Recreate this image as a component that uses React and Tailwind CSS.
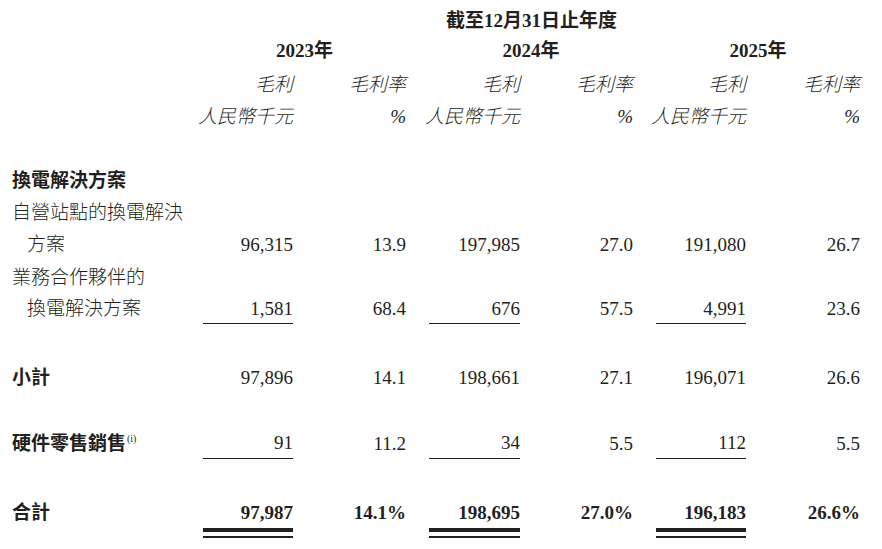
import React from 'react'

const grid = 'grid grid-cols-[191px_90px_113px_23px_91px_113px_23px_90px_114px]'

const rows = [
  { label: '自營站點的換電解決', h: 'h-[32px]' },
  { label: '方案', indent: true, h: 'h-[33px]', vals: ['96,315', '13.9', '197,985', '27.0', '191,080', '26.7'] },
  { label: '業務合作夥伴的', h: 'h-[32px]' },
  { label: '換電解決方案', indent: true, h: 'h-[31px]', line: true, vals: ['1,581', '68.4', '676', '57.5', '4,991', '23.6'] },
]

const Cell = ({ children, line, bold }) => (
  <div className={`flex items-center justify-end whitespace-nowrap ${line ? 'border-b-[1.5px] border-[#231f20]' : ''} ${bold ? 'font-bold' : ''}`}>
    {children}
  </div>
)

const Row = ({ label, vals = [], h, indent, line, bold, boldNums, sup }) => (
  <div className={`${grid} ${h}`}>
    <div className={`flex items-center whitespace-nowrap ${indent ? 'pl-[15px]' : ''} ${bold ? 'font-bold' : ''}`}>
      {label}
      {sup && <span className="self-start mt-[7px] ml-[1px] text-[10px] font-normal">(i)</span>}
    </div>
    <Cell line={line} bold={boldNums}>{vals[0]}</Cell>
    <Cell bold={boldNums}>{vals[1]}</Cell>
    <div />
    <Cell line={line} bold={boldNums}>{vals[2]}</Cell>
    <Cell bold={boldNums}>{vals[3]}</Cell>
    <div />
    <Cell line={line} bold={boldNums}>{vals[4]}</Cell>
    <Cell bold={boldNums}>{vals[5]}</Cell>
  </div>
)

const Dbl = () => (
  <div className="flex flex-col">
    <div className="h-[4px] bg-[#231f20]" />
    <div className="h-[2px] mt-[4px] bg-[#231f20]" />
  </div>
)

const App = () => {
  return (
    <div className="w-[882px] h-[549px] bg-white text-[#231f20] text-[19px] font-light leading-none font-['Liberation_Serif','Noto_Sans_CJK_TC',serif] pl-[12px] pt-[4px] overflow-hidden">
      <div className={`${grid} h-[32px]`}>
        <div />
        <div className="col-span-8 flex items-center justify-center font-bold">截至12月31日止年度</div>
      </div>
      <div className={`${grid} h-[28px] font-bold`}>
        <div />
        <div className="col-span-2 flex items-center justify-center">2023年</div>
        <div />
        <div className="col-span-2 flex items-center justify-center">2024年</div>
        <div />
        <div className="col-span-2 flex items-center justify-center">2025年</div>
      </div>
      <div className="italic">
        <Row h="h-[40px]" vals={['毛利', '毛利率', '毛利', '毛利率', '毛利', '毛利率']} />
        <Row h="h-[24px]" vals={['人民幣千元', '%', '人民幣千元', '%', '人民幣千元', '%']} />
      </div>
      <div className="h-[36px]" />
      <Row label="換電解決方案" bold h="h-[32px]" />
      {rows.map((r, i) => (
        <Row key={i} {...r} />
      ))}
      <div className="h-[37px]" />
      <Row label="小計" bold h="h-[32px]" vals={['97,896', '14.1', '198,661', '27.1', '196,071', '26.6']} />
      <div className="h-[34px]" />
      <Row label="硬件零售銷售" bold sup line h="h-[32px]" vals={['91', '11.2', '34', '5.5', '112', '5.5']} />
      <div className="h-[38px]" />
      <Row label="合計" bold boldNums h="h-[31px]" vals={['97,987', '14.1%', '198,695', '27.0%', '196,183', '26.6%']} />
      <div className={grid}>
        <div />
        <Dbl />
        <div />
        <div />
        <Dbl />
        <div />
        <div />
        <Dbl />
        <div />
      </div>
    </div>
  )
}

export default App
